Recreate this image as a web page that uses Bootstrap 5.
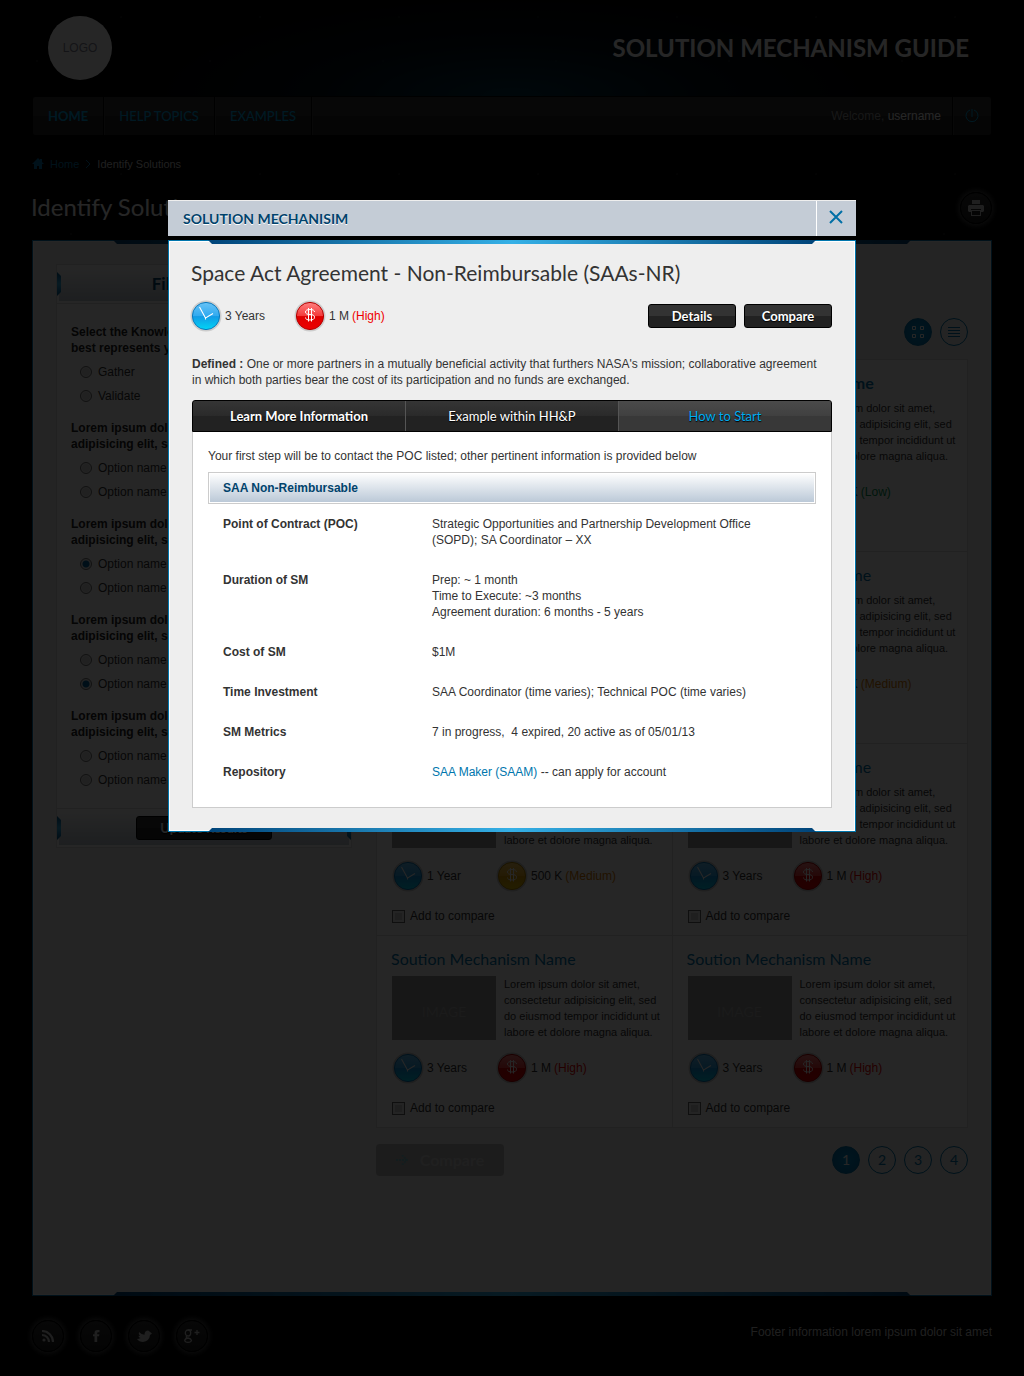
<!DOCTYPE html>
<html lang="en">
<head>
<meta charset="utf-8">
<meta name="viewport" content="width=device-width, initial-scale=1">
<title>Solution Mechanism Guide</title>
<link rel="stylesheet" href="https://cdn.jsdelivr.net/npm/bootstrap@5.3.0/dist/css/bootstrap.min.css">
<style>
:root{--copy:"Liberation Sans",Arial,sans-serif;--display:Lato,"Open Sans",sans-serif;--brand:#0076ad;--cyan:#00a9e6;--navy:#00436c}
body{font:12px/16px var(--copy);color:#333;background:#000;overflow:auto!important}
a{text-decoration:none;color:var(--brand)}
.display-face{font-family:var(--display)}
.sky{padding:0 32px;background:
 radial-gradient(circle at 37px 61px,#555,transparent 1px) 0 0/173px 191px,
 radial-gradient(circle at 121px 17px,#444,transparent 1px) 0 0/139px 157px,
 radial-gradient(circle at 71px 103px,#444,transparent 1px) 0 0/97px 131px,#000}
.glow{margin:0 -32px;padding:0 55px 0 48px;height:96px;background:radial-gradient(ellipse 400px 110px at 50% 100%,#003349,rgba(0,25,38,.6) 50%,transparent)}
.logo-disc{width:64px;height:64px;border-radius:50%;background:#fff;color:#889}
.site-name{font-size:24px;line-height:32px;font-weight:700;color:#fff;margin:0}
.menu-bar{min-height:38px;margin:1px;padding:0;border-radius:2px;background:linear-gradient(#2e2e2e 50%,#232323 50%)}
.menu-bar a.tab-link{padding:0 15px;line-height:38px;color:var(--cyan);border-right:1px solid #000;box-shadow:1px 0 #3a3a3a;font-size:13px;font-family:var(--display);font-weight:500}
.menu-bar .who{color:#999;padding-right:11px}
.menu-bar .who a{color:#fff}
.power{width:39px;height:38px;border:0;border-left:1px solid #000;background:none;box-shadow:inset 1px 0 #3a3a3a;color:var(--cyan)}
.crumbs{height:56px;font-size:11px;gap:6px}
.crumbs span{color:#ccc}
.page-title{font-size:24px;line-height:32px;color:#fff;font-weight:400;margin:-1px 0 0 -1px}
.disc{width:32px;height:32px;border-radius:50%;border:1px solid #000;background:linear-gradient(#303030,#1d1d1d);box-shadow:0 0 5px 2px #444;color:#ccc;padding:0}
.notched{position:relative;border:1px solid var(--brand);background:#eee;box-shadow:inset 0 0 0 1px #fff}
.notched:before,.notched:after{content:"";position:absolute;left:var(--inset);right:var(--inset);height:4px;background:linear-gradient(90deg,#004479,#35b0e6 50%,#004479)}
.notched:before{top:-1px;clip-path:polygon(0 0,100% 0,calc(100% - 4px) 100%,4px 100%)}
.notched:after{bottom:-1px;clip-path:polygon(4px 0,calc(100% - 4px) 0,100% 100%,0 100%)}
.workspace{--inset:80px;padding:23px 23px 119px;gap:24px}
.filters{width:296px;flex:none;background:#fff;border:1px solid #ddd}
.fade-strip{position:relative;height:38px;border:2px solid #fff;background:linear-gradient(#fff,#c2ccd6)}
h2.fade-strip{font-size:17px;color:var(--navy)}
.fade-strip:before,.fade-strip:after{content:"";position:absolute;top:5px;width:4px;height:24px;background:linear-gradient(#005a91,#35b0e6,#005a91)}
.fade-strip:before{left:-2px;clip-path:polygon(0 0,100% 4px,100% 20px,0 100%)}
.fade-strip:after{right:-2px;clip-path:polygon(100% 0,0 4px,0 20px,100% 100%)}
.filter-body{padding:20px 14px 16px;border-top:1px solid #ddd;border-bottom:1px solid #ddd}
.filter-body fieldset{margin-bottom:12px}
.filter-body fieldset:last-child{margin-bottom:0}
.filter-body legend{font-size:12px;line-height:16px;font-weight:700;margin-bottom:4px;width:184px;color:#222}
.filter-body label{display:flex;align-items:center;gap:6px;height:24px;padding-left:9px}
.filter-body input{appearance:none;width:12px;height:12px;margin:0;border-radius:50%;border:1px solid #777;background:#ddd;box-shadow:inset 0 0 0 1px #eee}
.filter-body input:checked{background:radial-gradient(#0069a4 0 3px,#ddd 4px)}
.dark-btn{width:88px;height:24px;border:1px solid #000;border-radius:3px;background:linear-gradient(#333 50%,#222 50%);color:#fff;font:700 13px/22px var(--display);padding:0;text-align:center;text-shadow:0 1px 1px #000}
.dark-btn.wide{width:136px}
.round-btn{width:28px;height:28px;border-radius:50%;border:1px solid var(--brand);background:none;color:var(--brand);padding:0;font:400 14px/26px var(--display);text-align:center}
.round-btn.on{background:radial-gradient(#0093d0,#006fae);color:#fff}
.results{padding-top:54px}
.tiles{margin:13px 0 16px;border:1px solid #ddd;border-width:1px 0 0 1px}
.tile{height:192px;background:#fff;border:1px solid #ddd;border-width:0 1px 1px 0;padding:13px 8px 0 15px}
.tile h3{font:400 16px/20px var(--display);margin:0 0 7px -1px;color:var(--brand)}
.tile.hot h3{font-weight:700}
.thumb{width:104px;height:64px;flex:none;background:#999;color:#b2b2b2;font-size:14px;padding-top:8px}
.tile p{font-size:11px;line-height:16px;margin:0;flex:1}
.facts{height:32px}
.facts>span{display:flex;align-items:center;gap:3px;width:104px;white-space:nowrap}
.facts svg{flex:none}
.tile .facts{margin:12px 0 16px}
.tile label{gap:5px;height:16px}
.tile input{appearance:none;width:13px;height:13px;margin:0;border:1px solid #666;background:#ccc;box-shadow:inset 0 0 0 2px #eee}
.high{color:#e00}.medium{color:#d97a00}.low{color:#00934f}
.compare-off{width:128px;height:32px;border:0;border-radius:4px;background:#bbb;color:#d4d4d4;font:700 16px/32px var(--display);gap:12px}
.foot{min-height:80px;padding:24px 0;color:#ccc}
.foot ul{gap:16px;margin:0}
.foot p{margin:4px 0 0}
.modal-backdrop.show{opacity:.85}
.modal-dialog.guide{max-width:688px;margin:200px auto 0}
.guide .modal-content{background:none;border:0;border-radius:0;gap:4px;color:#333}
.guide .modal-header{height:36px;padding:0;border:0;border-top:1px solid #eee;border-radius:0;background:#c4ccd6}
.guide h2{font:700 14px/36px var(--display);color:var(--navy);margin:0;padding-left:15px;text-shadow:0 1px #fff}
.shut{width:40px;height:35px;border:0;border-left:1px solid #fff;background:none;color:#006fa6;padding:0 1px 3px 0}
.guide .modal-body{--inset:39px;padding:20px 23px 23px}
.guide h3{font:400 21px/24px var(--display);margin:0 0 15px -1px}
.guide .facts{margin:0 0 0 -2px}
.definition{padding:0 6px 8px 0;margin:0 0 4px}
.tabs-strip{border:1px solid #000;border-radius:3px 3px 0 0;background:linear-gradient(#353535,#2a2a2a 50%,#222 50%);overflow:hidden}
.tabs-strip button{flex:1;height:30px;border:0;padding:0;background:none;color:#fff;font:400 13px/30px var(--display);text-shadow:0 1px 1px #000}
.tabs-strip button+button{border-left:1px solid #555}
.tabs-strip button:first-child{font-weight:700}
.tabs-strip button.active{background:linear-gradient(#4a4a4a,#404040 50%,#383838 50%);color:#00adf0}
.sheet{background:#fff;border:1px solid #ccc;border-top:0;padding:16px 15px 15px}
.sheet caption{caption-side:top;height:32px;padding:0 14px;line-height:30px;border:1px solid #ccc;box-shadow:inset 0 0 0 1px #fff;background:linear-gradient(#fff,#b9c7d6);color:var(--navy);font-weight:700}
.sheet table{width:100%;margin-top:8px}
.sheet th,.sheet td{vertical-align:top;padding:12px 0}
.sheet th{width:224px;padding-left:15px}
.sheet td{padding-right:48px}
</style>
</head>
<body>
<svg width="0" height="0" class="position-absolute" aria-hidden="true">
 <defs>
  <linearGradient id="gb" x2="0" y2="1"><stop offset="0" stop-color="#68c3f6"/><stop offset=".5" stop-color="#30aaf0"/><stop offset=".52" stop-color="#129be6"/><stop offset="1" stop-color="#00d5f5"/></linearGradient>
  <linearGradient id="gr" x2="0" y2="1"><stop offset="0" stop-color="#ff8080"/><stop offset=".5" stop-color="#f33a3a"/><stop offset=".52" stop-color="#df0000"/><stop offset="1" stop-color="#ed0000"/></linearGradient>
  <linearGradient id="gy" x2="0" y2="1"><stop offset="0" stop-color="#ffd060"/><stop offset=".5" stop-color="#f0b020"/><stop offset=".52" stop-color="#dfa000"/><stop offset="1" stop-color="#edc800"/></linearGradient>
 </defs>
 <symbol id="clock" viewBox="0 0 32 32"><circle cx="16" cy="16" r="15.5" fill="#ccc"/><circle cx="16" cy="16" r="13.6" fill="url(#gb)" stroke="#0b79bd"/><path d="M9.500 7l6 11 7.500-4.500M15.500 17v2.500" fill="none" stroke="#fff" stroke-width="1.100"/></symbol>
 <symbol id="coin-mark" viewBox="0 0 32 32"><path d="M20.500 12q0-2.500-4.500-2.500t-4.500 2.500q0 2.500 4.500 2.500t4.500 2.700q0 2.800-4.500 2.800t-4.500-2.500M14.500 8v13.500M17.500 8v13.500" fill="none" stroke="#fff"/></symbol>
 <symbol id="high" viewBox="0 0 32 32"><circle cx="16" cy="16" r="15.500" fill="#ccc"/><circle cx="16" cy="16" r="13.600" fill="url(#gr)" stroke="#b30000"/><use href="#coin-mark"/></symbol>
 <symbol id="medium" viewBox="0 0 32 32"><circle cx="16" cy="16" r="15.500" fill="#ccc"/><circle cx="16" cy="16" r="13.600" fill="url(#gy)" stroke="#b38600"/><use href="#coin-mark"/></symbol>
</svg>

<div class="sky">
 <header>
  <div class="glow d-flex justify-content-between align-items-center">
   <div class="logo-disc d-flex align-items-center justify-content-center">LOGO</div>
   <p class="site-name display-face">SOLUTION MECHANISM GUIDE</p>
  </div>
  <nav class="menu-bar navbar flex-nowrap" aria-label="Main">
   <div class="d-flex me-auto">
    <a class="tab-link fw-bold" href="#">HOME</a><a class="tab-link" href="#">HELP TOPICS</a><a class="tab-link" href="#">EXAMPLES</a>
   </div>
   <div class="who">Welcome, <a href="#">username</a></div>
   <button class="power d-flex align-items-center justify-content-center" type="button" aria-label="Sign out"><svg class="flex-shrink-0" width="14" height="14" viewBox="0 0 14 14" fill="none" stroke="currentColor"><path d="M5 1a6 6 0 1 0 4 0M7 0v8"/></svg></button>
  </nav>
 </header>

 <nav class="crumbs d-flex align-items-center" aria-label="Breadcrumb">
  <svg width="12" height="12" viewBox="0 0 12 12" fill="#0076ad"><path d="M6 0L0 6h2v5h3V8h2v3h3V6h2L10 4V1H8v1z"/></svg>
  <a href="#">Home</a>
  <svg width="6" height="8" viewBox="0 0 6 8" fill="none" stroke="#0076ad"><path d="M1 0l4 4-4 4"/></svg>
  <span>Identify Solutions</span>
 </nav>
 <div class="d-flex justify-content-between mb-3">
  <h1 class="page-title display-face">Identify Solutions</h1>
  <button class="disc d-flex align-items-center justify-content-center" type="button" aria-label="Print"><svg width="16" height="16" viewBox="0 0 16 16" fill="currentColor"><path d="M4 0h8v4H4zM1 5h14l1 1v5l-1 1h-2V9H3v3H1l-1-1V6zM3 10h10v6H3zm1 1v4h8v-4z" fill-rule="evenodd"/></svg></button>
 </div>

 <main class="workspace notched d-flex align-items-start">
  <form class="filters">
   <h2 class="fade-strip display-face mb-0 fw-bold d-flex align-items-center justify-content-center">Filter Options</h2>
   <div class="filter-body" id="filterBody"></div>
   <div class="fade-strip d-flex justify-content-center align-items-center"><button class="dark-btn wide" type="button">Update Results</button></div>
  </form>
  <section class="results flex-grow-1">
   <div class="d-flex justify-content-end gap-2">
    <button class="round-btn on d-flex align-items-center justify-content-center" type="button" aria-label="Grid view"><svg width="12" height="12" fill="none" stroke="currentColor"><path d="M.5.5h3v3h-3zM8.500.5h3v3h-3zM.5 8.500h3v3h-3zM8.500 8.500h3v3h-3z"/></svg></button>
    <button class="round-btn d-flex align-items-center justify-content-center" type="button" aria-label="List view"><svg width="12" height="12" stroke="currentColor"><path d="M0 1.500h12M0 4.500h12M0 7.500h12M0 10.500h12"/></svg></button>
   </div>
   <div class="tiles row row-cols-2 g-0" id="tiles"></div>
   <div class="d-flex justify-content-between align-items-center">
    <button class="compare-off d-flex align-items-center justify-content-center" type="button" disabled><svg width="12" height="10" fill="none" stroke="#7fc0c8" stroke-width="2" stroke-dasharray="2 1"><path d="M0 5h11M6 0l5 5-5 5"/></svg>Compare</button>
    <nav class="d-flex gap-2" aria-label="Pages"><a class="round-btn on" href="#">1</a><a class="round-btn" href="#">2</a><a class="round-btn" href="#">3</a><a class="round-btn" href="#">4</a></nav>
   </div>
  </section>
 </main>

 <footer class="foot d-flex justify-content-between">
  <ul class="list-unstyled d-flex">
   <li><a class="disc d-flex align-items-center justify-content-center" href="#" aria-label="RSS"><svg width="12" height="12" fill="none" stroke="currentColor" stroke-width="2.200"><circle cx="2" cy="10" r="1.600" fill="currentColor" stroke="none"/><path d="M0 5a7 7 0 0 1 7 7M0 1a11 11 0 0 1 11 11"/></svg></a></li>
   <li><a class="disc d-flex align-items-center justify-content-center" href="#" aria-label="Facebook"><svg width="7" height="12" viewBox="0 0 7 12" fill="currentColor"><path d="M1.500 12V6.300H0V4.200h1.500V3Q1.500 0 4.400 0H6.500v2.200H5.200Q4.200 2.200 4.200 3v1.200h2.200L6 6.300H4.200V12z"/></svg></a></li>
   <li><a class="disc d-flex align-items-center justify-content-center" href="#" aria-label="Twitter"><svg width="15" height="12" viewBox="0 0 15 12" fill="currentColor"><path d="M0 9q2 0 3.500-1Q1.500 7.500 1.500 5.800L3 6Q1 4.500 2 2q2.500 2.500 5.500 2.800Q7.500 1 10.500.6q1.400 0 2 .9L15 3.500 13 5q-.5 6-7 7Q2 12 0 9z"/></svg></a></li>
   <li><a class="disc d-flex align-items-center justify-content-center" href="#" aria-label="Google Plus"><svg width="16" height="14" viewBox="0 0 16 14" fill="none" stroke="currentColor" stroke-width="1.300"><ellipse cx="4" cy="4" rx="2.700" ry="3"/><path d="M4 1h4M3 7Q1 8.500 4 9t3.500 2.300Q7 13.300 4 13.300T.7 11.500Q1 9.500 4 9M10.500 3.500h5M13 1v5"/></svg></a></li>
  </ul>
  <p>Footer information lorem ipsum dolor sit amet</p>
 </footer>
</div>

<div class="modal-backdrop show"></div>
<div class="modal show d-block" tabindex="-1" role="dialog" aria-modal="true" aria-labelledby="guideTitle">
 <div class="modal-dialog guide">
  <div class="modal-content">
   <div class="modal-header">
    <h2 id="guideTitle">SOLUTION MECHANISIM</h2>
    <button class="shut d-flex align-items-center justify-content-center" type="button" aria-label="Close"><svg width="14" height="14" stroke="currentColor" stroke-width="2"><path d="M1 1l12 12M13 1L1 13"/></svg></button>
   </div>
   <div class="modal-body notched">
    <h3>Space Act Agreement - Non-Reimbursable (SAAs-NR)</h3>
    <div class="d-flex align-items-center justify-content-between mb-4">
     <div class="facts d-flex"><span><svg width="32" height="32"><use href="#clock"/></svg>3 Years</span><span><svg width="32" height="32"><use href="#high"/></svg>1 M <span class="high">(High)</span></span></div>
     <div class="d-flex gap-2"><button class="dark-btn" type="button">Details</button><button class="dark-btn" type="button">Compare</button></div>
    </div>
    <p class="definition"><b>Defined :</b> One or more partners in a mutually beneficial activity that furthers NASA's mission; collaborative agreement in which both parties bear the cost of its participation and no funds are exchanged.</p>
    <div class="tabs-strip d-flex" role="tablist">
     <button type="button" role="tab">Learn More Information</button><button type="button" role="tab">Example within HH&amp;P</button><button class="active" type="button" role="tab" aria-selected="true">How to Start</button>
    </div>
    <div class="sheet" role="tabpanel">
     <p class="mb-0">Your first step will be to contact the POC listed; other pertinent information is provided below</p>
     <table>
      <caption>SAA Non-Reimbursable</caption>
      <tbody>
      <tr><th scope="row">Point of Contract (POC)</th><td>Strategic Opportunities and Partnership Development Office (SOPD); SA Coordinator – XX</td></tr>
      <tr><th scope="row">Duration of SM</th><td>Prep: ~ 1 month<br>Time to Execute: ~3 months<br>Agreement duration: 6 months - 5 years</td></tr>
      <tr><th scope="row">Cost of SM</th><td>$1M</td></tr>
      <tr><th scope="row">Time Investment</th><td>SAA Coordinator (time varies); Technical POC (time varies)</td></tr>
      <tr><th scope="row">SM Metrics</th><td>7 in progress,&nbsp; 4 expired, 20 active as of 05/01/13</td></tr>
      <tr><th scope="row">Repository</th><td><a href="#">SAA Maker (SAAM)</a> -- can apply for account</td></tr>
      </tbody>
     </table>
    </div>
   </div>
  </div>
 </div>
</div>

<script src="https://cdn.jsdelivr.net/npm/bootstrap@5.3.0/dist/js/bootstrap.bundle.min.js"></script>
<script>
const lorem = 'Lorem ipsum dolor sit amet, adipisicing elit, sed';
const groups = [
  ['Select the Knowledge area that best represents you', ['Gather', 'Validate'], -1],
  [lorem, ['Option name', 'Option name'], -1],
  [lorem, ['Option name', 'Option name'], 0],
  [lorem, ['Option name', 'Option name'], 1],
  [lorem, ['Option name', 'Option name'], -1]
];
document.getElementById('filterBody').innerHTML = groups.map(([title, options, picked], g) =>
  `<fieldset><legend>${title}</legend>${options.map((o, i) =>
    `<label><input type="radio" name="group${g}"${i === picked ? ' checked' : ''}>${o}</label>`).join('')}</fieldset>`).join('');

const cards = [
  ['3 Years', '1 M', 'High'], ['3 Years', '100 K', 'Low'],
  ['3 Years', '1 M', 'High'], ['1 Year', '500 K', 'Medium'],
  ['1 Year', '500 K', 'Medium'], ['3 Years', '1 M', 'High'],
  ['3 Years', '1 M', 'High'], ['3 Years', '1 M', 'High']
];
document.getElementById('tiles').innerHTML = cards.map(([time, cost, level], i) => {
  const key = level.toLowerCase();
  return `<article class="col tile${i === 1 ? ' hot' : ''}"><h3>Soution Mechanism Name</h3>
  <div class="d-flex gap-2"><div class="thumb display-face d-flex align-items-center justify-content-center">IMAGE</div>
  <p>Lorem ipsum dolor sit amet, consectetur adipisicing elit, sed do eiusmod tempor incididunt ut labore et dolore magna aliqua.</p></div>
  <div class="facts d-flex"><span><svg width="32" height="32"><use href="#clock"/></svg>${time}</span>
  <span><svg width="32" height="32"><use href="#${key === 'high' ? 'high' : 'medium'}"/></svg>${cost} <span class="${key}">(${level})</span></span></div>
  <label class="d-inline-flex align-items-center"><input type="checkbox">Add to compare</label></article>`;
}).join('');
</script>
</body>
</html>
